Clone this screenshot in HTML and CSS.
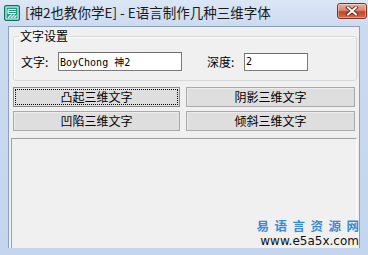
FILE: index.html
```html
<!DOCTYPE html>
<html lang="zh">
<head>
<meta charset="utf-8">
<title>E语言制作几种三维字体</title>
<link rel="stylesheet" href="styles.css">
</head>
<body>
<div class="win">
  <div class="titlebar">
    <svg class="appicon" width="16" height="16" viewBox="0 0 16 16">
      <rect x="0.5" y="0.5" width="15" height="15" rx="1.5" fill="#1f9c88" stroke="#11705f"/>
      <rect x="2" y="2" width="12" height="12" fill="none" stroke="#e9fbf6" stroke-width="1"/>
      <path d="M4 4.5H12M4 6.5H12M4 4.5V8.5H12" fill="none" stroke="#ffffff" stroke-width="1"/>
      <path d="M4 13L7.5 9.5M7 13L10.5 9.5M10 13L12.5 10.5" fill="none" stroke="#ffffff" stroke-width="1.2"/>
    </svg>
    <span class="title">[神2也教你学E] - E语言制作几种三维字体</span>
    <div class="close">
      <svg width="14" height="10" viewBox="0 0 14 10">
        <path d="M3 1.5L11 8.5M11 1.5L3 8.5" stroke="#5a1a10" stroke-width="3.6" stroke-linecap="square"/>
        <path d="M3 1.5L11 8.5M11 1.5L3 8.5" stroke="#ffffff" stroke-width="2" stroke-linecap="square"/>
      </svg>
    </div>
  </div>
  <div class="client">
    <fieldset class="group">
      <legend class="legend">文字设置</legend>
      <div class="row">
        <span class="lbl">文字:</span>
        <input class="inp inp-wide" type="text" value="BoyChong 神2">
        <span class="lbl lbl-depth">深度:</span>
        <input class="inp inp-narrow" type="text" value="2">
      </div>
    </fieldset>
    <div class="buttons">
      <button class="btn btn-focus">凸起三维文字</button>
      <button class="btn">阴影三维文字</button>
      <button class="btn">凹陷三维文字</button>
      <button class="btn">倾斜三维文字</button>
    </div>
    <div class="panel"></div>
  </div>
  <div class="watermark">
    <div class="wm-cn">易语言资源网</div>
    <div class="wm-url">www.e5a5x.com</div>
  </div>
</div>
</body>
</html>
```
FILE: styles.css
```css
html, body {
  margin: 0;
  padding: 0;
}
body {
  width: 368px;
  height: 255px;
  overflow: hidden;
  background: #c6d8ee;
}
.win {
  position: relative;
  width: 368px;
  height: 255px;
  box-sizing: border-box;
  padding: 0 8px 7px 8px;
  display: flex;
  flex-direction: column;
  background: linear-gradient(to bottom, #dbe7f5 0px, #cbdbef 26px, #c3d6ed 100%);
}
.titlebar {
  height: 26px;
  display: flex;
  align-items: center;
  margin-left: -4px;
  margin-right: -7px;
}
.appicon {
  display: block;
  margin-top: -1px;
  flex: none;
}
.title {
  margin-left: 5px;
  font-family: "Noto Sans CJK SC", "Noto Sans", sans-serif;
  font-size: 13.5px;
  color: #1b1b1b;
  white-space: nowrap;
  flex: 1;
  margin-top: -2px;
}
.close {
  width: 30px;
  height: 16px;
  margin-top: -4px;
  margin-right: 0;
  box-sizing: border-box;
  border: 1px solid #7d3426;
  border-radius: 3px;
  background: linear-gradient(to bottom, #e8b3a3 0%, #d98671 45%, #c4472c 55%, #cf6a4c 100%);
  display: flex;
  align-items: center;
  justify-content: center;
  box-shadow: inset 0 0 0 1px rgba(255,255,255,0.35);
}
.close svg { display: block; }
.client {
  flex: 1;
  display: flex;
  flex-direction: column;
  background: #f0f0f0;
  border: 1px solid #8aa2bf;
  border-bottom: none;
  min-height: 0;
  font-family: "Noto Sans CJK SC", sans-serif;
  font-size: 12px;
  color: #000;
}
.group {
  margin: 2px 2px 0 4px;
  padding: 0 0 0 7px;
  border: 1px solid #d5d9dc;
  border-radius: 3px;
  box-shadow: inset 1px 1px 0 #ffffff;
  min-width: 0;
}
.legend {
  padding: 0 1px;
  margin-left: -2px;
  font-size: 12px;
  line-height: 14px;
}
.row {
  display: flex;
  align-items: center;
  height: 19px;
  margin-top: 9px;
  margin-bottom: 9px;
}
.lbl {
  width: 37px;
  flex: none;
  line-height: 14px;
  white-space: nowrap;
}
.lbl-depth {
  margin-left: 25px;
}
.inp {
  box-sizing: border-box;
  height: 19px;
  margin: 0;
  padding: 0 1px;
  border: 1px solid #7a7a7a;
  border-top-color: #6d6d6d;
  background: #ffffff;
  font-family: "DejaVu Sans Mono", "Noto Sans CJK SC", monospace;
  font-size: 10px;
  color: #000;
  outline: none;
}
.inp-wide { width: 124px; }
.inp-narrow { width: 64px; height: 18px; }
.buttons {
  display: grid;
  grid-template-columns: 167px 169px;
  grid-auto-rows: 20px;
  column-gap: 6px;
  row-gap: 4px;
  margin: 6px 3px 0 4px;
}
.btn {
  margin: 0;
  padding: 0;
  box-sizing: border-box;
  border: 1px solid #a9a9a9;
  background: #dedede;
  box-shadow: inset 1px 1px 0 #ececec;
  font-family: "Noto Sans CJK SC", sans-serif;
  font-size: 12px;
  line-height: 14px;
  color: #000;
}
.btn-focus {
  outline: 1px dotted #000;
  outline-offset: -3px;
  border-color: #8c8c8c;
}
.panel {
  flex: 1;
  margin: 7px 2px 0 2px;
  border-top: 1px solid #a0a0a0;
  border-left: 1px solid #a0a0a0;
  border-right: 1px solid #ffffff;
  background: #f0f0f0;
}
.watermark {
  position: absolute;
  right: 9px;
  bottom: 8px;
  display: flex;
  flex-direction: column;
  align-items: flex-end;
}
.wm-cn {
  font-family: "Noto Sans CJK SC", sans-serif;
  font-weight: 700;
  font-size: 12.5px;
  line-height: 13px;
  letter-spacing: 5.5px;
  margin-right: -5.5px;
  color: #3a8ad6;
}
.wm-url {
  margin-top: 4px;
  font-family: "DejaVu Sans", sans-serif;
  font-size: 12px;
  line-height: 11px;
  color: #111;
}
```
